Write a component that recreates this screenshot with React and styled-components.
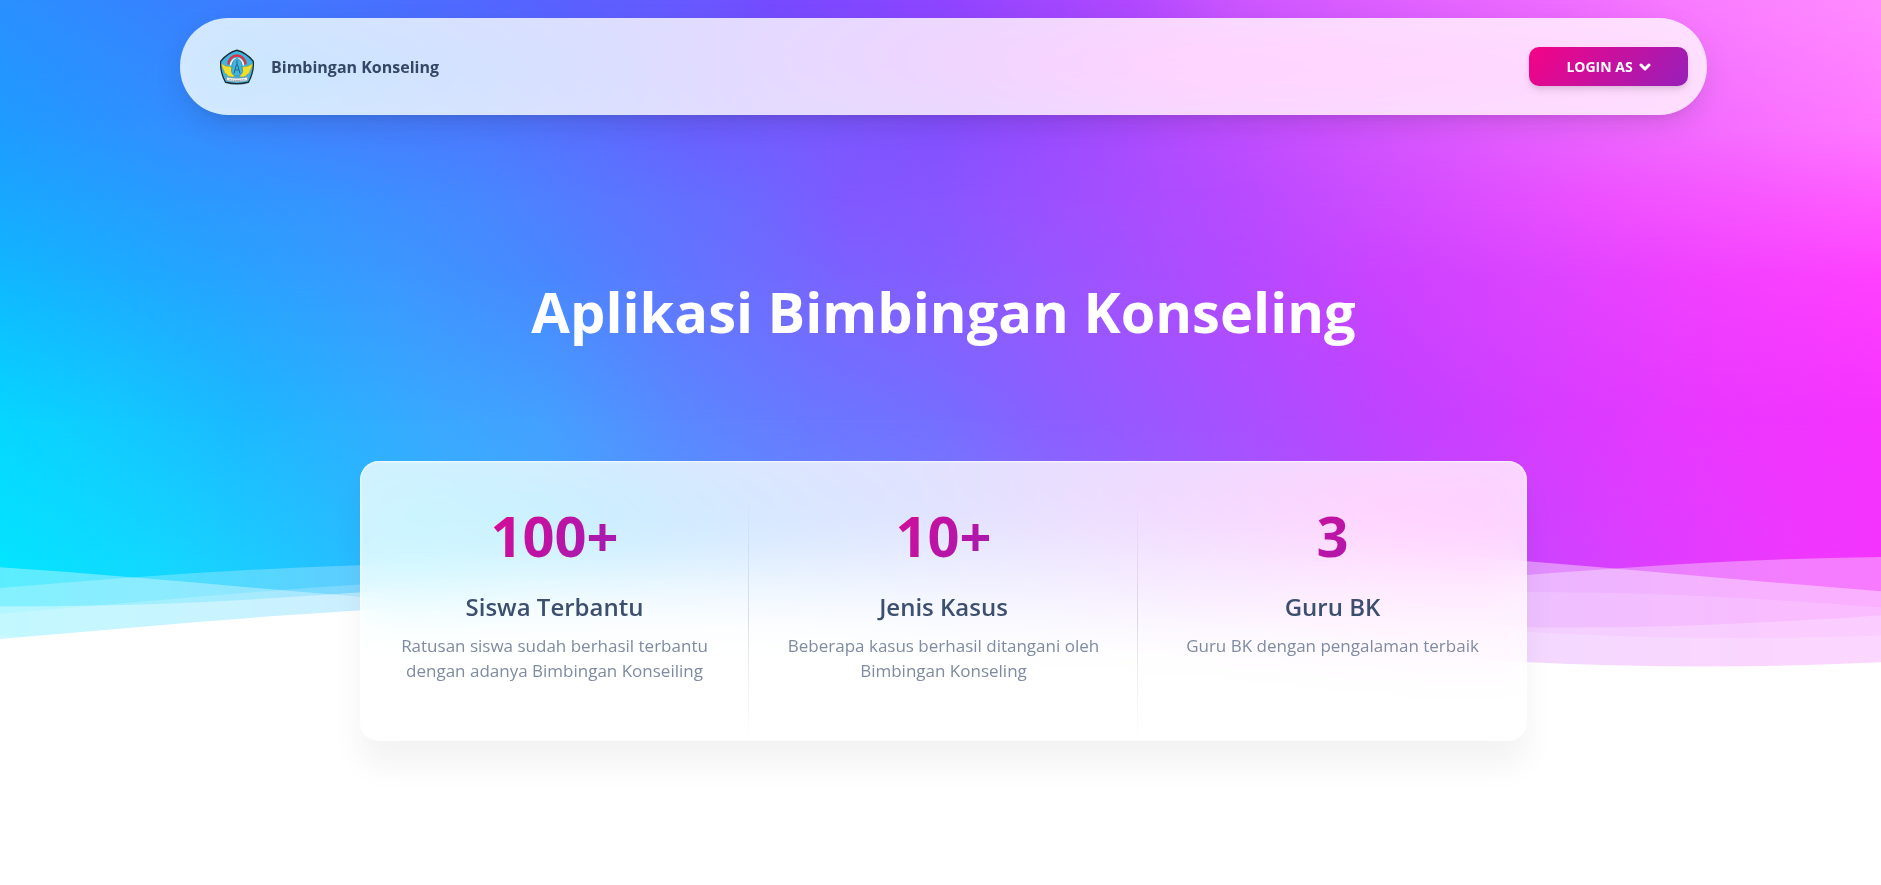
import React from "react";
import styled, { createGlobalStyle } from "styled-components";

const GlobalStyle = createGlobalStyle`
  *, *::before, *::after { box-sizing: border-box; }
  body {
    margin: 0;
    background: #fff;
    color: #344767;
    font-family: "Open Sans", "Noto Sans", sans-serif;
    overflow-x: hidden;
  }
  h1, h2, p { margin: 0; }
`;

const Page = styled.main`
  min-height: 100vh;
`;

const Hero = styled.header`
  position: relative;
  overflow: hidden;
  padding: 18px 24px 328px 30px;
`;

const Backdrop = styled.div`
  position: absolute;
  inset: 0;
  background: linear-gradient(90deg, ${(p) => p.$stops});
  ${(p) => p.$fade && `mask-image: linear-gradient(180deg, #000 ${p.$fade[0]}px, transparent ${p.$fade[1]}px);`}
`;

const Waves = styled.svg`
  position: absolute;
  left: 0;
  bottom: 0;
  display: block;
  width: 100%;
  height: 16vh;
  min-height: 100px;
  max-height: 150px;
`;

const Navbar = styled.nav`
  position: relative;
  z-index: 1;
  display: flex;
  align-items: center;
  justify-content: space-between;
  max-width: 1527px;
  margin: 0 auto;
  padding: 29px 19px 29px 39px;
  border-radius: 48px;
  background: rgba(255, 255, 255, 0.8);
  backdrop-filter: saturate(200%) blur(30px);
  box-shadow:
    0 10px 31px -5px rgba(20, 20, 20, 0.15),
    0 10px 11px -6px rgba(20, 20, 20, 0.06);
`;

const Brand = styled.a`
  display: flex;
  align-items: center;
  gap: 16px;
  color: #344767;
  font-size: 16px;
  font-weight: 700;
  line-height: 24px;
  text-decoration: none;
`;

const Emblem = styled.svg`
  display: block;
  width: 36px;
  height: 36px;
`;

const LoginButton = styled.button`
  display: flex;
  align-items: center;
  justify-content: center;
  gap: 6px;
  width: 159px;
  height: 39px;
  padding: 0;
  border: 0;
  border-radius: 10px;
  background-image: linear-gradient(310deg, #7928ca, #ff0080);
  background-size: 150%;
  background-position-x: 25%;
  box-shadow:
    0 5px 8px -1px rgba(0, 0, 0, 0.11),
    0 2px 5px -1px rgba(0, 0, 0, 0.07);
  color: #fff;
  font-family: inherit;
  font-size: 14px;
  font-weight: 700;
  line-height: 20px;
  text-transform: uppercase;
  cursor: pointer;
`;

const Chevron = styled.svg`
  display: block;
  width: 12px;
  height: 8px;
`;

const Title = styled.h1`
  position: relative;
  margin-top: 154px;
  color: #fff;
  font-size: 56px;
  font-weight: 700;
  line-height: 84px;
  text-align: center;
`;

const StatsSection = styled.section`
  position: relative;
  z-index: 2;
  margin-top: -220px;
  padding: 0 24px 96px 30px;
`;

const StatsCard = styled.div`
  display: grid;
  grid-template-columns: repeat(3, 1fr);
  max-width: 1167px;
  margin: 0 auto;
  border-radius: 19px;
  background: rgba(255, 255, 255, 0.8);
  backdrop-filter: saturate(200%) blur(30px);
  box-shadow:
    inset 0 0 2px 1px rgba(254, 254, 254, 0.82),
    0 24px 32px 0 rgba(0, 0, 0, 0.05);
`;

const Stat = styled.article`
  position: relative;
  padding: 34px 19px 58px;
  text-align: center;

  & + &::before {
    content: "";
    position: absolute;
    left: -1px;
    top: 34px;
    bottom: 0;
    width: 1px;
    background: linear-gradient(
      180deg,
      rgba(0, 0, 0, 0),
      rgba(0, 0, 0, 0.12) 50%,
      rgba(0, 0, 0, 0)
    );
  }
`;

const Figure = styled.p`
  background: linear-gradient(310deg, #7928ca, #ff0080);
  background-clip: text;
  color: transparent;
  font-size: 56px;
  font-weight: 700;
  line-height: 80px;
`;

const StatTitle = styled.h2`
  margin-top: 16px;
  color: #3d4f6e;
  font-size: 24px;
  font-weight: 600;
  line-height: 32px;
`;

const StatText = styled.p`
  margin-top: 10px;
  padding: 0 19px;
  color: #7f8ba2;
  font-size: 17px;
  line-height: 25px;
`;

/* Horizontal colour bands of the mesh, lowest first; each fades into the one below it. */
const BACKDROPS = [
  {
    stops:
      "#04e4ff 0%, #14d6ff 9%, #28bcff 19%, #44a8ff 30%, #5c90ff 40%, #7480ff 50%, #a058ff 66%, #cc44ff 81%, #dc3eff 87%, #ee38ff 95%, #f434ff 100%",
  },
  {
    stops:
      "#06d6ff 0%, #10ccff 5%, #1cb8ff 13%, #3aa8ff 23%, #44a0ff 29%, #5a88ff 36%, #6a78ff 43%, #766eff 50%, #8c5eff 56%, #a850ff 66%, #c042ff 74%, #d63cff 82%, #e838ff 90%, #f632ff 100%",
    fade: [420, 560],
  },
  {
    stops:
      "#10b8ff 0%, #22a6ff 10%, #3c98ff 21%, #4888ff 29%, #6474ff 37%, #7c62ff 45%, #865cff 50%, #9856ff 56%, #b44aff 66%, #cc42ff 74%, #dc44ff 82%, #f040ff 90%, #ff40ff 100%",
    fade: [280, 420],
  },
  {
    stops:
      "#18a8ff 0%, #2a9aff 10%, #3694ff 17%, #4886ff 26%, #5878ff 32%, #6c68ff 40%, #8058ff 45%, #8856ff 50%, #9c50ff 56%, #b84aff 66%, #d04cff 74%, #ee50ff 85%, #ff5cff 100%",
    fade: [200, 280],
  },
  {
    stops:
      "#1e9cff 0%, #348eff 10%, #4084ff 17%, #4c7aff 26%, #5a6eff 32%, #6a60ff 37%, #785aff 43%, #8450ff 50%, #9a4cff 56%, #b44cff 63%, #ca50ff 70%, #e05cff 79%, #f068ff 88%, #ff78ff 100%",
    fade: [130, 200],
  },
  {
    stops:
      "#2a90ff 0%, #3a7eff 11%, #4a6eff 21%, #5862ff 29%, #6858ff 37%, #764aff 41%, #8e44ff 50%, #b048ff 60%, #cc56ff 66%, #de60ff 74%, #ee6cff 83%, #f87cff 90%, #ff8cff 100%",
    fade: [0, 130],
  },
];

const WAVES = [
  { x: -14, y: -1, opacity: 0.4 },
  { x: 49, y: 3, opacity: 0.35 },
  { x: 109, y: 5, opacity: 0.25 },
  { x: 123, y: 8, opacity: 0.2 },
  { x: 18, y: 13, opacity: 0.15 },
  { x: 120, y: 16, opacity: 1 },
];

const STATS = [
  {
    figure: "100+",
    title: "Siswa Terbantu",
    text: "Ratusan siswa sudah berhasil terbantu dengan adanya Bimbingan Konseiling",
  },
  {
    figure: "10+",
    title: "Jenis Kasus",
    text: "Beberapa kasus berhasil ditangani oleh Bimbingan Konseling",
  },
  {
    figure: "3",
    title: "Guru BK",
    text: "Guru BK dengan pengalaman terbaik",
  },
];

function SchoolEmblem() {
  return (
    <Emblem viewBox="0 0 72 72" aria-hidden="true">
      <path
        d="M36 2.5Q54 7 68.500 24.500Q70.500 45 59 66.500Q36 72.500 13 66.500Q1.500 45 3.500 24.500Q18 7 36 2.500Z"
        fill="#41b5e2"
        stroke="#1c2d38"
        strokeWidth="2.600"
        strokeLinejoin="round"
      />
      <path d="M19 31A17 18 0 0 1 53 31" fill="none" stroke="#dc3340" strokeWidth="5" />
      <path d="M23.500 33A12.500 14 0 0 1 48.500 33" fill="none" stroke="#f4f4f4" strokeWidth="3.500" />
      <path
        d="M5 29Q13 36 21 35Q27 35 26 42Q27 51 33 53L28 56Q17 56 15 50Q10 49 10 43Q6 39 5 29Z"
        fill="#f3df2b"
        stroke="#8f8b27"
        strokeWidth="0.800"
      />
      <path
        d="M67 29Q59 36 51 35Q45 35 46 42Q45 51 39 53L44 56Q55 56 57 50Q62 49 62 43Q66 39 67 29Z"
        fill="#f3df2b"
        stroke="#8f8b27"
        strokeWidth="0.800"
      />
      <path
        d="M36 18Q45 22 46 31Q45 35 47 41Q48 50 40 54H32Q24 50 25 41Q27 35 26 31Q27 22 36 18Z"
        fill="#41b5e2"
        stroke="#2b6f92"
        strokeWidth="1"
      />
      <path d="M36 23V31M35 31L30 49M37 31L42 49M33 42H39" fill="none" stroke="#235571" strokeWidth="1.800" />
      <path d="M15 56Q36 61 57 56V63Q36 68 15 63Z" fill="#eceff0" stroke="#77858c" strokeWidth="1" />
      <path d="M21 61Q36 65 51 61" fill="none" stroke="#8b979d" strokeWidth="2" strokeDasharray="3 1.500" />
    </Emblem>
  );
}

export default function App() {
  return (
    <>
      <GlobalStyle />
      <Page>
        <Hero>
          {BACKDROPS.map((layer) => (
            <Backdrop key={layer.stops} $stops={layer.stops} $fade={layer.fade} />
          ))}
          <Waves viewBox="0 24 150 40" preserveAspectRatio="none" aria-hidden="true">
            {WAVES.map((wave) => (
              <path
                key={wave.y}
                d="M-160 44c30 0 58-18 88-18s58 18 88 18 58-18 88-18 58 18 88 18v44h-352z"
                transform={`translate(${wave.x} ${wave.y})`}
                fill="#fff"
                fillOpacity={wave.opacity}
              />
            ))}
          </Waves>
          <Navbar>
            <Brand href="#">
              <SchoolEmblem />
              Bimbingan Konseling
            </Brand>
            <LoginButton type="button">
              Login as
              <Chevron viewBox="0 0 12 8" aria-hidden="true">
                <path
                  d="M2 2L6 6L10 2"
                  fill="none"
                  stroke="#fff"
                  strokeWidth="3"
                  strokeLinecap="round"
                  strokeLinejoin="round"
                />
              </Chevron>
            </LoginButton>
          </Navbar>
          <Title>Aplikasi Bimbingan Konseling</Title>
        </Hero>
        <StatsSection>
          <StatsCard>
            {STATS.map((stat) => (
              <Stat key={stat.title}>
                <Figure>{stat.figure}</Figure>
                <StatTitle>{stat.title}</StatTitle>
                <StatText>{stat.text}</StatText>
              </Stat>
            ))}
          </StatsCard>
        </StatsSection>
      </Page>
    </>
  );
}
